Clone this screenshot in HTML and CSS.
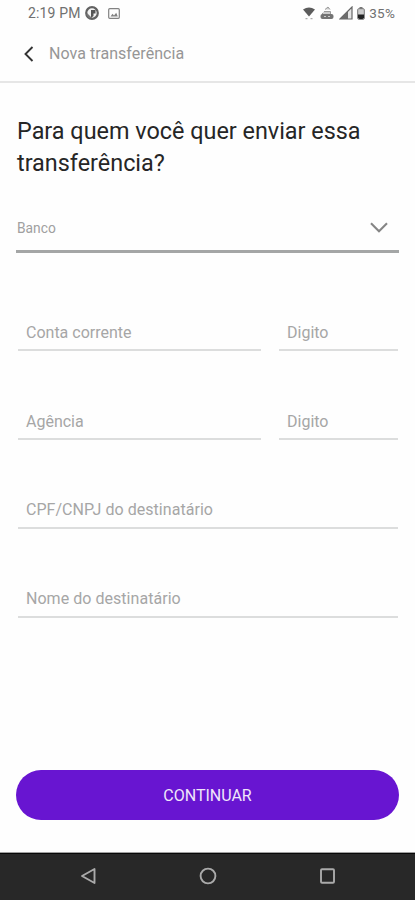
FILE: index.html
```html
<!DOCTYPE html>
<html lang="pt-BR">
<head>
<meta charset="utf-8">
<meta name="viewport" content="width=device-width, initial-scale=1">
<title>Nova transferência</title>
<link rel="stylesheet" href="styles.css">
</head>
<body>
<div class="screen">
  <div class="status">
    <span class="time">2:19 PM</span>
    <svg class="app-icon" width="14" height="14" viewBox="0 0 14 14"><circle cx="7" cy="7" r="5.8" fill="#f4f4f4" stroke="#626262" stroke-width="2.2"/><path d="M6 4h4.5v3.5H8.5V10L6 12Z" fill="#555"/><path d="M2 7 4.5 9.5 7 12H4L1.5 9Z" fill="#777"/></svg>
    <svg class="photo-icon" width="12" height="11" viewBox="0 0 12 11"><rect x=".7" y=".7" width="10.6" height="9.6" rx="1" fill="none" stroke="#828282" stroke-width="1.2"/><path d="m2.5 8.5 2-2.7 1.5 1.7 2.2-2.8 1.6 3.8Z" fill="#828282"/></svg>
    <div class="signals">
      <svg width="12" height="13" viewBox="0 0 12 13"><path d="M0 2.5Q6-1.5 12 2.5L6 9.5Z" fill="#5c5c5c"/><path d="M2.5 11.7h2M7.5 11.7h2" stroke="#999"/></svg>
      <svg width="14" height="14" viewBox="0 0 14 14"><path d="M5 3.5 8 1l2 2.5M4 5.5h6.5v3H2.5V7" fill="#ccc" stroke="#9a9a9a"/><rect x=".5" y="8" width="13" height="5" rx="2" fill="#747474"/><path d="M4 10.5h2M8 10.5h2" stroke="#ccc"/></svg>
      <svg width="14" height="14" viewBox="0 0 14 14"><path d="M1 13 13 1v12Z" fill="#e5e5e5" stroke="#666" stroke-width="1.2"/><path d="M1 13 9 5v8Z" fill="#6c6c6c"/></svg>
      <svg width="8" height="13" viewBox="0 0 8 13"><path d="M2.5 0h3v2h-3Z" fill="#777"/><rect x=".7" y="1.7" width="6.6" height="10.6" rx="1" fill="#ccc" stroke="#777"/><path d="M1 7.5h6V11L5.5 12h-3L1 11Z" fill="#222"/></svg>
    </div>
    <span class="battery">35%</span>
  </div>

  <header class="header">
    <svg width="10" height="16" viewBox="0 0 10 16"><path d="M8.5 1 1.5 8l7 7" fill="none" stroke="#333" stroke-width="1.9"/></svg>
    <span>Nova transferência</span>
  </header>

  <main class="content">
    <h1>Para quem você quer enviar essa transferência?</h1>
    <div class="select">
      <span>Banco</span>
      <svg width="18" height="11" viewBox="0 0 18 11"><path d="m1 1.2 8 8 8-8" fill="none" stroke="#858585" stroke-width="2.1"/></svg>
    </div>
    <form class="form">
      <div class="row split">
        <div class="field">Conta corrente</div>
        <div class="field">Digito</div>
      </div>
      <div class="row split">
        <div class="field">Agência</div>
        <div class="field">Digito</div>
      </div>
      <div class="row"><div class="field wide">CPF/CNPJ do destinatário</div></div>
      <div class="row"><div class="field wide">Nome do destinatário</div></div>
    </form>
    <button class="continue" type="button">CONTINUAR</button>
  </main>

  <nav class="nav">
    <svg width="18" height="18" viewBox="0 0 18 18"><path d="M15.5 2v14L3 9Z" fill="none" stroke="#aaa" stroke-width="1.9" stroke-linejoin="round"/></svg>
    <svg width="18" height="18" viewBox="0 0 18 18"><circle cx="9" cy="9" r="7.4" fill="none" stroke="#aaa" stroke-width="1.9"/></svg>
    <svg width="18" height="18" viewBox="0 0 18 18"><rect x="2" y="2.2" width="13" height="13.6" rx="1" fill="none" stroke="#aaa" stroke-width="1.9"/></svg>
  </nav>
</div>
</body>
</html>
```

FILE: styles.css
```css
* { box-sizing: border-box; }

body {
  margin: 0;
  background: #fefefe;
  font-family: Roboto, "Liberation Sans", sans-serif;
}

svg { display: block; flex: none; }

.screen {
  display: flex;
  flex-direction: column;
  width: 415px;
  height: 900px;
  overflow: hidden;
}

.status {
  display: flex;
  align-items: center;
  height: 26px;
  padding: 0 20px 0 28px;
  color: #707070;
  font-size: 14px;
}

.time { width: 57px; white-space: nowrap; letter-spacing: .15px; }
.photo-icon { margin-left: 9px; }

.signals {
  display: flex;
  align-items: center;
  gap: 5px;
  margin-left: auto;
}

.signals svg:last-child { margin-left: -1px; }

.battery { margin-left: 4px; font-size: 13.5px; letter-spacing: .2px; }

.header {
  display: flex;
  align-items: center;
  gap: 15px;
  height: 57px;
  padding: 0 24px;
  border-bottom: 2px solid #e6e6e6;
  color: #969696;
  font-size: 16px;
  letter-spacing: .05px;
}

.content {
  display: flex;
  flex: 1;
  flex-direction: column;
  padding: 32px 16px 32px;
}

h1 {
  margin: 0 0 0 1px;
  color: #262626;
  font-size: 23.4px;
  font-weight: 400;
  line-height: 32px;
}

.select {
  display: flex;
  align-items: center;
  justify-content: space-between;
  height: 50px;
  margin-top: 24px;
  padding: 2px 11px 0 1px;
  border-bottom: 3px solid #a4a6a6;
  color: #a0a0a0;
  font-size: 13.8px;
}

.form {
  display: grid;
  grid-auto-rows: 40px;
  gap: 49px;
  margin: 58px 1px 0 2px;
}

.row { display: grid; }
.split { grid-template-columns: 243px 119px; justify-content: space-between; }

.field {
  padding: 11px 0 0 8px;
  border-bottom: 2px solid #dcdddd;
  color: #a6a6a6;
  font-size: 16px;
  line-height: 22px;
}

.wide { padding-top: 10px; letter-spacing: .04px; }

.continue {
  height: 50px;
  margin: auto 0 0;
  padding: 1px 0 0;
  border: 0;
  border-radius: 25px;
  background: #6815d1;
  color: #f0e6fa;
  font: 400 16px Roboto, "Liberation Sans", sans-serif;
}

.nav {
  display: flex;
  justify-content: space-between;
  height: 48px;
  padding: 14px 78px 0 79px;
  border-top: 1px solid #a0a0a0;
  background: #282828;
  box-shadow: inset 0 1px #080808;
}
```
